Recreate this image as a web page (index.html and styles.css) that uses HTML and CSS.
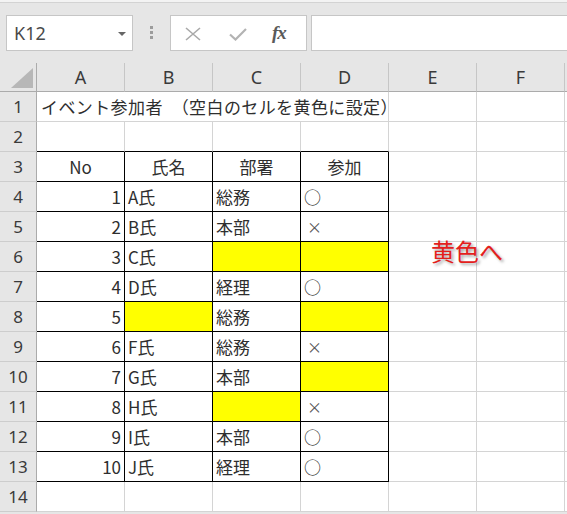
FILE: index.html
```html
<!DOCTYPE html>
<html lang="ja">
<head>
<meta charset="utf-8">
<link rel="stylesheet" href="styles.css">
</head>
<body>
<div class="edge"></div>
<div class="toolbar">
  <div class="namebox"><span class="nb-text">K12</span><span class="nb-arrow"></span></div>
  <div class="grip"><span></span><span></span><span></span></div>
  <div class="fxbox">
    <svg class="ic-x" width="16" height="14" viewBox="0 0 16 14"><path d="M1 1 L15 13 M15 1 L1 13" stroke="#a9a9a9" stroke-width="1.6" fill="none"/></svg>
    <svg class="ic-ok" width="18" height="13" viewBox="0 0 18 13"><path d="M1 6.5 L6.5 11.5 L17 1" stroke="#b3b3b3" stroke-width="2.2" fill="none"/></svg>
    <span class="ic-fx">fx</span>
  </div>
  <div class="formula"></div>
</div>
<div class="sheet">
  <div class="corner"><div class="tri"></div></div>
  <div class="ch">A</div><div class="ch">B</div><div class="ch">C</div><div class="ch">D</div><div class="ch">E</div><div class="ch">F</div><div class="ch"></div>

  <div class="rh">1</div><div class="c span4">イベント参加者　（空白のセルを黄色に設定）</div><div class="c"></div><div class="c"></div><div class="c"></div>
  <div class="rh">2</div><div class="c b2"></div><div class="c b2"></div><div class="c b2"></div><div class="c b2"></div><div class="c"></div><div class="c"></div><div class="c"></div>

  <div class="rh">3</div><div class="c t m">No</div><div class="c t m">氏名</div><div class="c t m">部署</div><div class="c t m">参加</div><div class="c"></div><div class="c"></div><div class="c"></div>
  <div class="rh">4</div><div class="c t r">1</div><div class="c t">A氏</div><div class="c t">総務</div><div class="c t">○</div><div class="c"></div><div class="c"></div><div class="c"></div>
  <div class="rh">5</div><div class="c t r">2</div><div class="c t">B氏</div><div class="c t">本部</div><div class="c t"><span class="cross">×</span></div><div class="c"></div><div class="c"></div><div class="c"></div>
  <div class="rh">6</div><div class="c t r">3</div><div class="c t">C氏</div><div class="c t y"></div><div class="c t y"></div><div class="c"></div><div class="c"></div><div class="c"></div>
  <div class="rh">7</div><div class="c t r">4</div><div class="c t">D氏</div><div class="c t">経理</div><div class="c t">○</div><div class="c"></div><div class="c"></div><div class="c"></div>
  <div class="rh">8</div><div class="c t r">5</div><div class="c t y"></div><div class="c t">総務</div><div class="c t y"></div><div class="c"></div><div class="c"></div><div class="c"></div>
  <div class="rh">9</div><div class="c t r">6</div><div class="c t">F氏</div><div class="c t">総務</div><div class="c t"><span class="cross">×</span></div><div class="c"></div><div class="c"></div><div class="c"></div>
  <div class="rh">10</div><div class="c t r">7</div><div class="c t">G氏</div><div class="c t">本部</div><div class="c t y"></div><div class="c"></div><div class="c"></div><div class="c"></div>
  <div class="rh">11</div><div class="c t r">8</div><div class="c t">H氏</div><div class="c t y"></div><div class="c t"><span class="cross">×</span></div><div class="c"></div><div class="c"></div><div class="c"></div>
  <div class="rh">12</div><div class="c t r">9</div><div class="c t">I氏</div><div class="c t">本部</div><div class="c t">○</div><div class="c"></div><div class="c"></div><div class="c"></div>
  <div class="rh">13</div><div class="c t r">10</div><div class="c t">J氏</div><div class="c t">経理</div><div class="c t">○</div><div class="c"></div><div class="c"></div><div class="c"></div>
  <div class="rh">14</div><div class="c"></div><div class="c"></div><div class="c"></div><div class="c"></div><div class="c"></div><div class="c"></div><div class="c"></div>
</div>
<div class="note">黄色へ</div>
</body>
</html>
```

FILE: styles.css
```css
html, body {
  margin: 0;
  padding: 0;
}
body {
  width: 567px;
  height: 514px;
  overflow: hidden;
  position: relative;
  background: #e6e6e6;
  font-family: "Noto Sans CJK JP", sans-serif;
}
.edge {
  height: 2px;
  background: #f3f3f3;
  border-bottom: 1px solid #d3d3d3;
}
.toolbar {
  height: 60px;
  box-sizing: border-box;
  background: #e6e6e6;
  display: flex;
  align-items: flex-start;
  padding-top: 12px;
}
.namebox {
  margin-left: 6px;
  width: 127px;
  height: 36px;
  box-sizing: border-box;
  background: #fff;
  border: 1px solid #c6c6c6;
  display: flex;
  align-items: center;
  justify-content: space-between;
  padding: 0 6px 0 7px;
}
.nb-text {
  font-family: "Noto Sans", sans-serif;
  font-size: 18px;
  color: #4a4a4a;
}
.nb-arrow {
  width: 0;
  height: 0;
  border-left: 4px solid transparent;
  border-right: 4px solid transparent;
  border-top: 4px solid #666;
  margin-top: 1px;
}
.grip {
  margin-left: 17px;
  margin-top: 11px;
  display: flex;
  flex-direction: column;
  gap: 2px;
}
.grip span {
  display: block;
  width: 3px;
  height: 3px;
  background: #9c9c9c;
}
.fxbox {
  margin-left: 17px;
  width: 137px;
  height: 36px;
  box-sizing: border-box;
  background: #fff;
  border: 1px solid #c6c6c6;
  display: flex;
  align-items: center;
  padding-left: 14px;
}
.ic-x {
  margin-top: 1px;
}
.ic-ok {
  margin-left: 28px;
  margin-top: 2px;
}
.ic-fx {
  margin-left: 25px;
  font-family: "Liberation Serif", serif;
  font-style: italic;
  font-weight: bold;
  font-size: 19px;
  color: #5a5a5a;
  letter-spacing: -1px;
}
.formula {
  margin-left: 4px;
  flex: 1;
  height: 36px;
  box-sizing: border-box;
  background: #fff;
  border: 1px solid #c6c6c6;
  margin-right: -10px;
}
.sheet {
  display: grid;
  grid-template-columns: 37px repeat(6, 88px) 30px;
  grid-template-rows: 29px repeat(14, 30px);
  background: #fff;
}
.corner {
  background: #e6e6e6;
  border-right: 1px solid #ababab;
  border-bottom: 1px solid #ababab;
  position: relative;
}
.tri {
  position: absolute;
  left: 11px;
  top: 5px;
  width: 22px;
  height: 20px;
  background: #b7b7b7;
  clip-path: polygon(100% 0, 100% 100%, 0 100%);
}
.ch {
  background: #e6e6e6;
  border-right: 1px solid #c6c6c6;
  border-bottom: 1px solid #ababab;
  display: flex;
  align-items: center;
  justify-content: center;
  font-family: "Noto Sans", sans-serif;
  font-size: 18px;
  color: #3a3a3a;
}
.rh {
  background: #e6e6e6;
  border-right: 1px solid #ababab;
  border-bottom: 1px solid #cdcdcd;
  display: flex;
  align-items: center;
  justify-content: center;
  font-family: "Noto Sans", sans-serif;
  font-size: 17px;
  color: #3a3a3a;
}
.c {
  border-right: 1px solid #d4d4d4;
  border-bottom: 1px solid #d4d4d4;
  display: flex;
  align-items: center;
  padding: 0 3px;
  font-size: 17px;
  color: #2e2e2e;
  white-space: nowrap;
  min-width: 0;
}
.span4 {
  grid-column: span 4;
  padding-left: 4px;
  letter-spacing: 0.4px;
}
.b2 {
  border-bottom-color: #000;
}
.t {
  border-right-color: #000;
  border-bottom-color: #000;
}
.r {
  justify-content: flex-end;
}
.m {
  justify-content: center;
}
.y {
  background: #ffff00;
}
.cross {
  font-size: 15px;
  color: #555;
  padding-left: 3px;
}
.note {
  position: absolute;
  left: 431px;
  top: 238px;
  font-size: 24px;
  line-height: 1.1;
  color: #e3201c;
  text-shadow: 2px 2px 3px rgba(0, 0, 0, 0.35);
}
```
